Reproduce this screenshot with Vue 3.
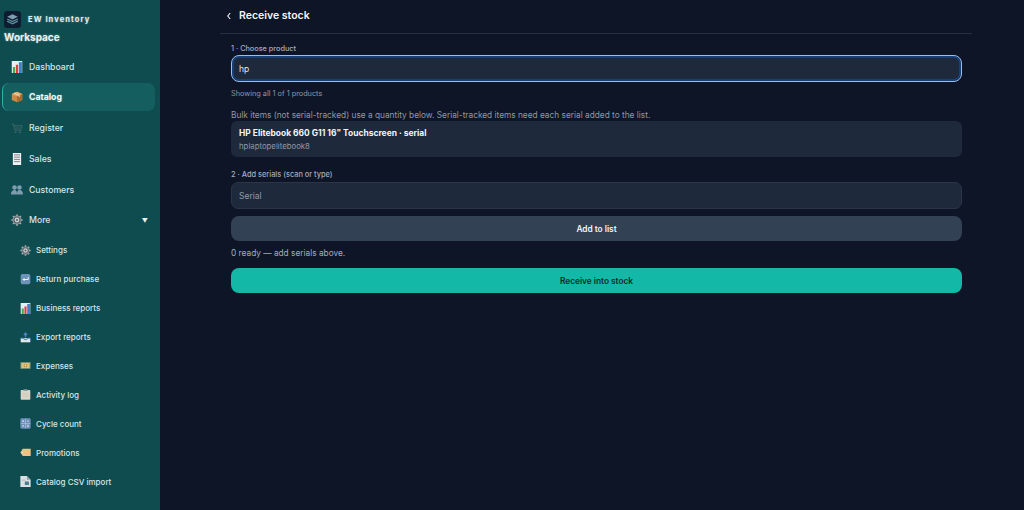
<script setup>
const r = (x, y, width, height, fill, rx = 0) => ({ t: 'rect', a: { x, y, width, height, fill, rx } })
const c = (cx, cy, radius, fill) => ({ t: 'circle', a: { cx, cy, r: radius, fill } })
const p = (d, fill = 'none', stroke = 'none', sw = 1) => ({ t: 'path', a: { d, fill, stroke, 'stroke-width': sw } })

const chart = [
  r(1, 0, 14, 16, '#e8eef2'),
  r(2.5, 8, 3, 8, '#3fae4a'),
  r(6.5, 5, 3, 11, '#d8413c'),
  r(10.5, 1.5, 4, 14.5, '#3f7fd0')
]
const gear = [
  p('M8 .5v15M.5 8h15M2.700 2.700l10.600 10.600M13.300 2.700L2.700 13.300', 'none', '#a7afb1', 2.2),
  c(8, 8, 6, '#8d9699'),
  c(8, 8, 4.700, '#59636a'),
  c(8, 8, 3.200, '#c9cfd1'),
  c(8, 8, 1.400, '#59636a')
]
const items = [
  { label: 'Dashboard', icon: chart },
  {
    label: 'Catalog', active: true,
    icon: [
      p('M8 1l7 3v8l-7 3-7-3V4z', '#c98a45'),
      p('M8 7l7-3v8l-7 3z', '#a96c30'),
      p('M8 1l7 3-7 3-7-3z', '#e2ad6c'),
      p('M4 2.600l7 3v2.500', 'none', '#f0dcb8', 1.200)
    ]
  },
  {
    label: 'Register',
    icon: [
      p('M1 3h2.500l2 8h7.500l1.500-6H4.500', 'none', '#3a6664', 1.400),
      p('M6 6l6 4M12 6l-6 4', 'none', '#3a6664', .9),
      c(6, 13.500, 1.300, '#3a6664'),
      c(12, 13.500, 1.300, '#3a6664')
    ]
  },
  {
    label: 'Sales',
    icon: [
      r(2.500, 0, 11, 16, '#eef1f1'),
      p('M4 2.500h8M4 5.500h8M4 8.500h8M4 11.500h8', 'none', '#6f7a80', 1.200)
    ]
  },
  {
    label: 'Customers',
    icon: [
      c(4.700, 4.500, 3, '#7f9cb0'),
      c(11.300, 4.500, 3, '#7f9cb0'),
      p('M0 14c0-4 2-6 4.700-6S8 10 8 14zM8 14c0-4 .5-6 3.300-6s4.700 2 4.700 6z', '#7f9cb0')
    ]
  },
  { label: 'More', icon: gear, caret: true }
]
const subitems = [
  { label: 'Settings', icon: gear },
  {
    label: 'Return purchase',
    icon: [
      r(1, 0, 14, 15, '#6f93b8', 2.500),
      p('M12 4.500v3.500H4.500M6.500 6l-2 2 2 2', 'none', '#f1f5f8', 1.400)
    ]
  },
  { label: 'Business reports', icon: chart },
  {
    label: 'Export reports',
    icon: [
      p('M1 9h14v6H1z', '#dfe8ee'),
      p('M1 9h4l1 2h4l1-2h4', 'none', '#4f86c4', 1.400),
      p('M8 8V2M5.500 4.500L8 1.500l2.500 3', 'none', '#4f86c4', 1.700)
    ]
  },
  {
    label: 'Expenses',
    icon: [
      r(.5, 3, 15, 10, '#6f8f70', 1),
      r(2, 4.500, 12, 7, '#d8c680', .5),
      c(8, 8, 2.700, '#c78a38'),
      c(8, 8, 1.300, '#eee0a8')
    ]
  },
  {
    label: 'Activity log',
    icon: [
      r(1, 1.500, 14, 14, '#d9d5c8', 1),
      r(5, .5, 6, 2.500, '#8d9a98', 1),
      p('M4 7h8M4 10h8', 'none', '#c2bdaf', .8)
    ]
  },
  {
    label: 'Cycle count',
    icon: [
      r(.5, .5, 15, 15, '#6f8fb8', 2),
      p('M8 1v14M1 8h14', 'none', '#b9cbdf', .8),
      p('M4.500 3v3M3 4.500h3M10 4.500h3M3.500 10.500l2 2M5.500 10.500l-2 2M10 10.500h3M10 12.500h3', 'none', '#eef3f8', .9)
    ]
  },
  {
    label: 'Promotions',
    icon: [
      p('M4 2.500h11.500v10.500H4L.5 8z', '#efc283'),
      c(3.500, 8, 1, '#f8efe0')
    ]
  },
  {
    label: 'Catalog CSV import',
    icon: [
      p('M.5 0h9.500l5.500 5.500v10.500H.5z', '#d9dfe2'),
      p('M10 0v5.500h5.500z', '#8fa0aa'),
      r(7, 8, 6, 5, '#4f7c8c', .5),
      p('M3 6h5', 'none', '#9aa7ae', 1)
    ]
  }
]
</script>

<template>
  <div class="shell">
    <aside class="sidebar">
      <div class="brand">
        <svg class="logo" viewBox="0 0 16 16">
          <rect width="16" height="16" rx="3" fill="#0d1c30" />
          <path d="M8 3l5 2.500-5 2.500-5-2.500z" fill="#7f9db0" />
          <path d="M3 7.500L8 10l5-2.500M3 9.500L8 12l5-2.500" fill="none" stroke="#5d8f9c" stroke-width="1.200" />
        </svg>
        <span>EW Inventory</span>
      </div>
      <div class="workspace">Workspace</div>
      <nav class="nav">
        <a v-for="item in items" :key="item.label" class="item" :class="{ active: item.active }">
          <svg class="icon" viewBox="0 0 16 16">
            <component :is="s.t" v-for="(s, i) in item.icon" :key="i" v-bind="s.a" />
          </svg>
          <span class="grow">{{ item.label }}</span>
          <span v-if="item.caret" class="caret">▼</span>
        </a>
      </nav>
      <nav class="subnav">
        <a v-for="item in subitems" :key="item.label" class="subitem">
          <svg class="subicon" viewBox="0 0 16 16">
            <component :is="s.t" v-for="(s, i) in item.icon" :key="i" v-bind="s.a" />
          </svg>
          <span>{{ item.label }}</span>
        </a>
      </nav>
    </aside>

    <main class="main">
      <div class="column">
        <header class="header">
          <svg class="back" viewBox="0 0 8 10">
            <path d="M5.200 2L2.800 5l2.400 3" fill="none" stroke="#f1f5f9" stroke-width="1.100" />
          </svg>
          <h1>Receive stock</h1>
        </header>
        <div class="form">
          <label class="label first">1 · Choose product</label>
          <div class="input focus">hp</div>
          <p class="hint">Showing all 1 of 1 products</p>
          <p class="note">Bulk items (not serial-tracked) use a quantity below. Serial-tracked items need each serial added to the list.</p>
          <div class="product">
            <strong>HP Elitebook 660 G11 16" Touchscreen · serial</strong>
            <span>hplaptopelitebook8</span>
          </div>
          <label class="label second">2 · Add serials (scan or type)</label>
          <div class="input placeholder">Serial</div>
          <button class="btn secondary">Add to list</button>
          <p class="ready">0 ready — add serials above.</p>
          <button class="btn primary">Receive into stock</button>
        </div>
      </div>
    </main>
  </div>
</template>

<style>
html, body { margin: 0; background: #0e1526; }
</style>

<style scoped>
.shell {
  display: flex;
  width: 1024px;
  height: 510px;
  overflow: hidden;
  font-family: Inter, "Liberation Sans", sans-serif;
  background: #0e1526;
}
.sidebar {
  width: 160px;
  flex: none;
  background: #0f4c50;
  color: #d5e6e6;
  overflow: hidden;
}
.brand {
  display: flex;
  align-items: center;
  gap: 7px;
  padding: 11px 0 0 4px;
  height: 17px;
  font-size: 7.500px;
  font-weight: 700;
  letter-spacing: 1.100px;
  color: #e2eeee;
  text-shadow: 0 0 2px rgba(235, 245, 245, .45);
}
.logo { width: 17px; height: 17px; flex: none; }
.workspace {
  margin: 2px 0 0 4px;
  font-size: 10px;
  line-height: 14px;
  font-weight: 700;
  color: #e8f2f2;
  text-shadow: 0 0 2px rgba(235, 245, 245, .45);
}
.nav {
  display: flex;
  flex-direction: column;
  gap: 2.800px;
  margin: 8.500px 5px 0 2px;
}
.item {
  display: flex;
  align-items: center;
  height: 28px;
  gap: 6px;
  padding-left: 8px;
  padding-right: 7px;
  font-size: 8.700px;
  font-weight: 500;
  border-radius: 7px;
  border-left: 1px solid transparent;
}
.item.active {
  background: #145e5f;
  border-left-color: #2bb3a3;
  color: #f2f8f8;
  font-weight: 700;
  text-shadow: 0 0 2px rgba(235, 245, 245, .35);
}
.grow { flex: 1; }
.icon { width: 12px; height: 12px; flex: none; }
.caret { font-size: 6px; color: #e8f2f2; }
.subnav {
  display: flex;
  flex-direction: column;
  margin-top: 1.500px;
}
.subitem {
  display: flex;
  align-items: center;
  height: 28.900px;
  gap: 5px;
  padding-left: 20px;
  font-size: 8px;
  font-weight: 500;
}
.subicon { width: 11px; height: 11px; flex: none; }
.main { flex: 1; }
.column {
  width: 752px;
  margin-left: 60px;
}
.header {
  display: flex;
  align-items: center;
  gap: 4px;
  height: 31px;
  padding: 0 0 2px 5px;
  border-bottom: 1px solid #262f40;
}
.back { width: 8px; height: 10px; }
h1 {
  margin: 0 0 0 2px;
  font-size: 10.500px;
  font-weight: 600;
  color: #f1f5f9;
}
.form {
  display: flex;
  flex-direction: column;
  width: 731px;
  margin-left: 11px;
}
.label {
  font-size: 7.300px;
  font-weight: 500;
  line-height: 10px;
  color: #a4adba;
}
.label.first { margin-top: 10px; }
.label.second { margin-top: 13px; font-size: 7.400px; }
.input {
  display: flex;
  align-items: center;
  box-sizing: border-box;
  height: 26px;
  padding: 0 7px;
  font-size: 8.500px;
  color: #e2e8f0;
  background: #1e293b;
  border: 1px solid #2a3547;
  border-radius: 7px;
}
.input.focus {
  height: 27px;
  margin-top: 1px;
  border: 1px solid #9dbdea;
  box-shadow: inset 0 0 0 2px #173f75;
  border-radius: 8px;
}
.input.placeholder {
  height: 27px;
  margin-top: 2px;
  color: #8f9aab;
}
.hint {
  margin: 7px 0 0;
  font-size: 7.300px;
  line-height: 10px;
  color: #8f99a8;
}
.note {
  margin: 11px 0 0;
  font-size: 8.300px;
  line-height: 11px;
  color: #8f99a8;
  white-space: nowrap;
}
.product {
  display: flex;
  flex-direction: column;
  justify-content: center;
  box-sizing: border-box;
  height: 36px;
  padding: 0 8px;
  gap: 2px;
  background: #1e293b;
  border-radius: 6px;
}
.product strong {
  font-size: 8.450px;
  font-weight: 700;
  line-height: 11px;
  color: #f1f5f9;
}
.product span {
  font-size: 7.800px;
  line-height: 10px;
  color: #8f99a8;
}
.btn {
  height: 25px;
  border: 0;
  border-radius: 8px;
  font-family: inherit;
  font-size: 8.300px;
  font-weight: 600;
  padding: 0;
}
.secondary {
  margin-top: 7px;
  background: #334155;
  color: #f1f5f9;
}
.ready {
  margin: 7px 0 0;
  font-size: 8.300px;
  line-height: 11px;
  color: #a4adba;
}
.primary {
  margin-top: 9px;
  background: #14b8a6;
  color: #0f2a2e;
}
</style>
